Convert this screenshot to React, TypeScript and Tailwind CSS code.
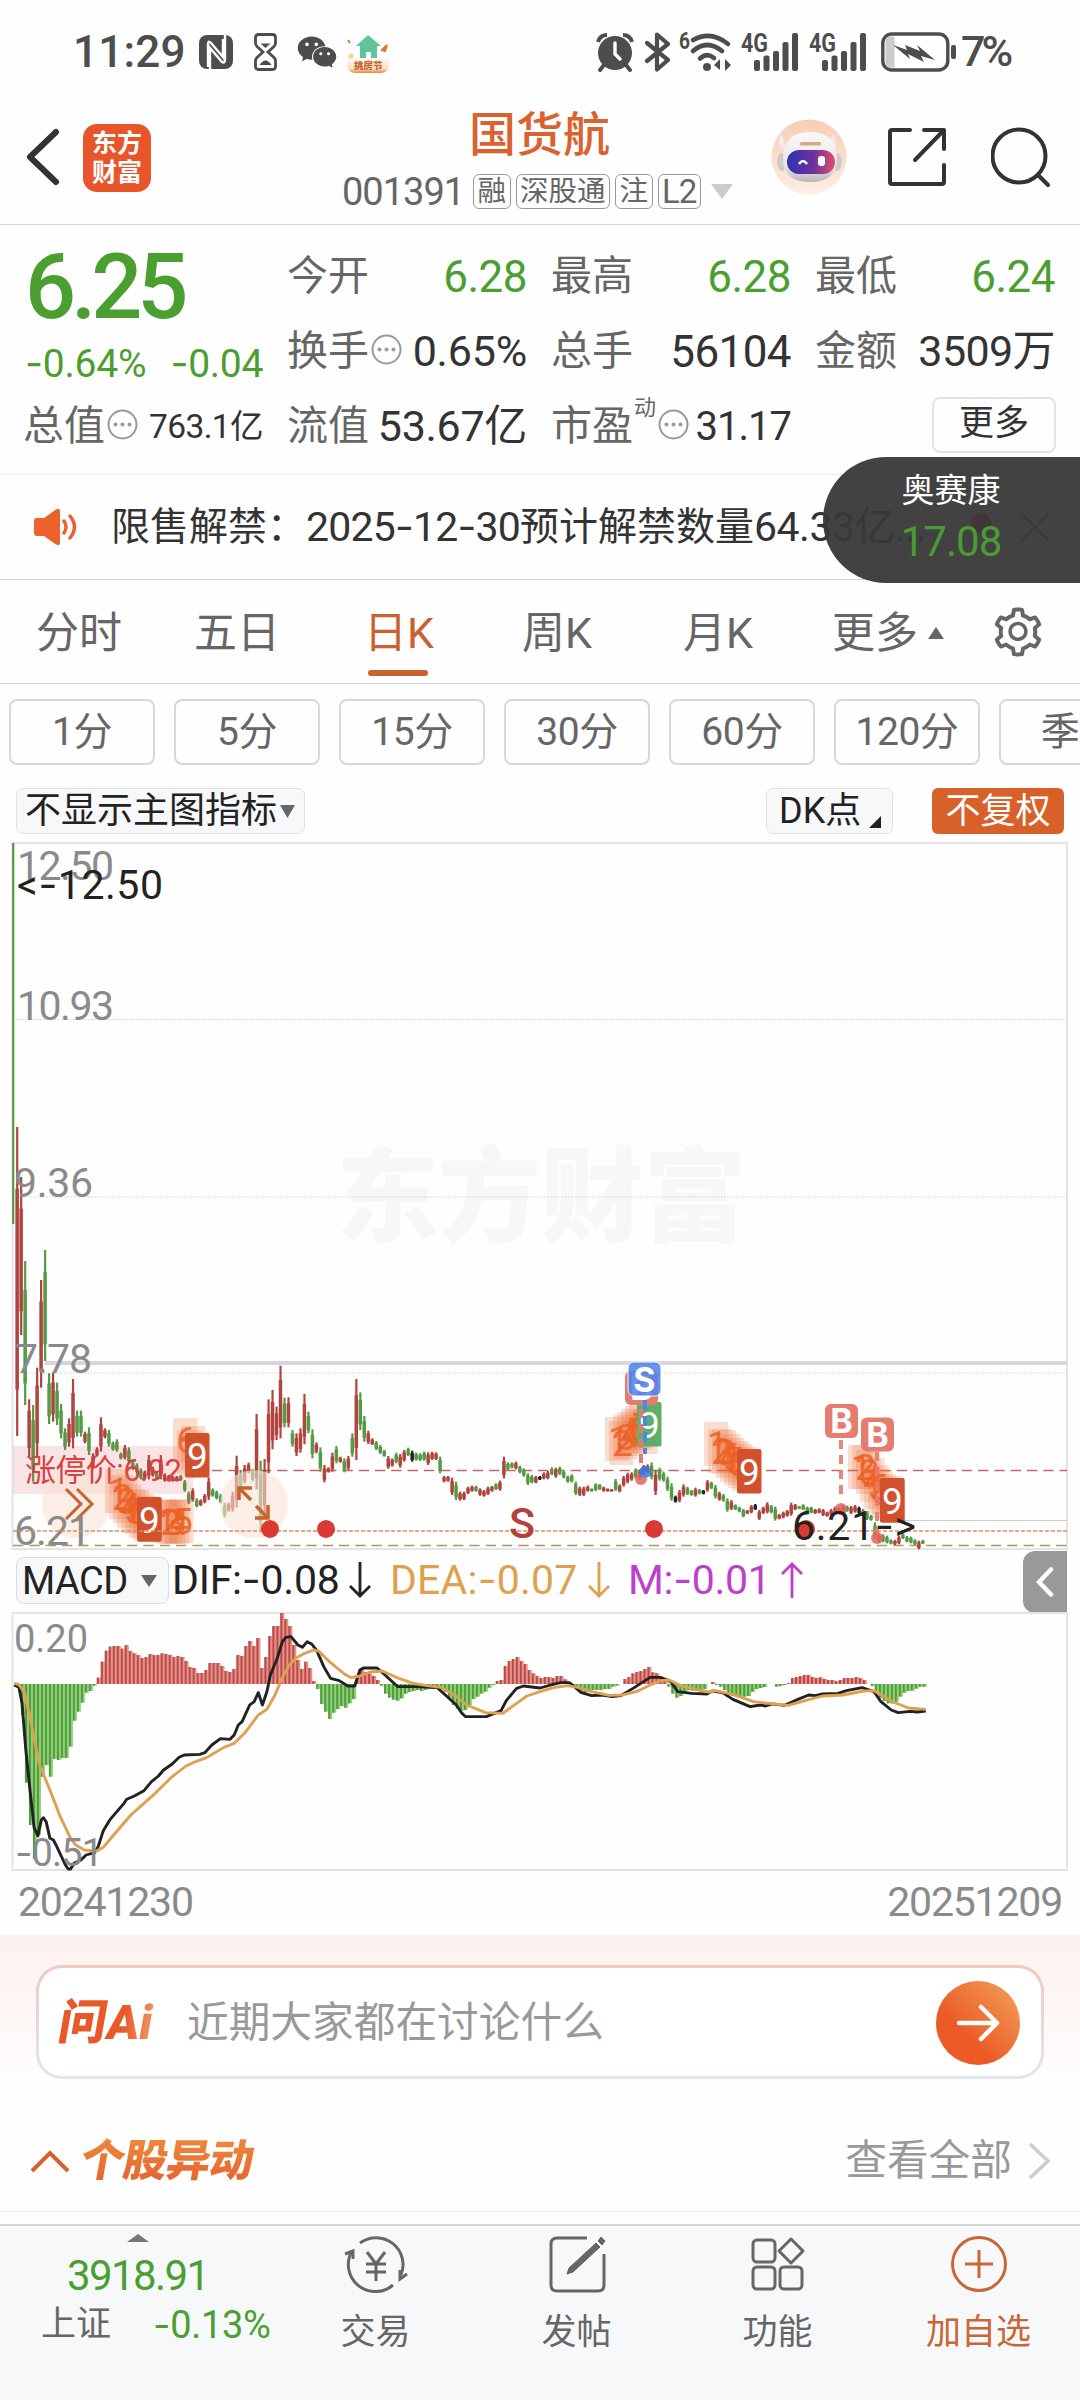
import React from "react";
import { AiFillWechat, AiOutlineSetting } from "react-icons/ai";

const RED = "#b0453f";
const GREEN = "#559a45";
const DARK = "#222222";
const STEP = 3.99;

// one entry per trading day: colour, top, bottom (in thirds of a px below y=1310)
const candles = `g -1401 -258,r -549 378,r -399 75,g -147 285,r 268 440,g 285 515,r 173 440,r -90 233,g -180 153,g 190 342,
r 188 335,g 218 345,g 282 385,g 355 420,r 325 410,r 207 415,g 302 380,g 302 380,r 365 400,g 352 435,
r 430 478,r 412 440,r 322 425,r 355 385,g 360 410,g 395 422,g 388 425,g 428 448,r 405 448,g 412 460,
g 455 480,g 460 490,g 475 508,r 482 508,r 435 508,r 470 500,g 485 508,r 435 508,r 490 515,r 495 515,
r 498 515,r 498 515,g 495 512,g 510 545,g 545 582,r 535 575,g 565 592,r 568 588,r 552 580,r 502 570,
g 535 560,g 542 568,g 552 580,g 578 622,r 578 605,r 545 605,r 437 592,g 480 545,r 465 520,r 458 490,
g 478 515,r 312 538,g 452 665,r 447 610,r 268 490,r 240 418,r 290 390,r 167 385,g 263 352,r 262 352,
g 360 410,r 370 438,r 355 428,r 252 403,g 305 370,g 358 445,r 397 430,g 412 485,r 465 517,r 472 488,
r 428 485,g 408 460,r 440 458,g 445 487,r 438 480,g 370 440,r 207 450,g 247 360,g 318 395,r 362 402,
r 385 405,g 393 420,g 405 432,g 420 440,r 438 476,r 445 470,g 428 460,r 432 473,r 420 455,g 413 438,
k 422 455,g 428 452,g 430 453,g 425 452,r 427 465,r 425 450,r 427 450,g 440 490,r 498 517,r 498 515,
r 503 555,g 515 570,r 545 572,r 545 570,r 530 552,r 527 545,g 527 545,r 535 557,r 540 560,r 530 555,
r 528 545,g 520 540,r 512 542,r 440 505,g 457 480,g 457 475,r 455 478,g 467 490,g 475 500,g 490 525,
g 495 520,r 498 520,k 498 510,r 487 508,r 483 508,g 472 495,r 473 503,g 470 495,g 482 505,g 497 518,
g 493 517,g 515 555,r 530 558,r 530 558,r 527 545,g 535 545,g 520 543,g 522 540,r 530 545,r 535 545,
r 537 545,g 507 543,r 523 547,r 498 530,r 488 520,r 487 512,g 475 505,r 480 510,r 465 495,r 463 490,
g 457 508,r 480 555,g 473 512,g 485 515,g 500 543,g 520 572,k 557 578,r 540 577,r 523 560,g 530 555,
g 540 557,r 533 560,g 537 553,k 540 553,r 510 545,g 515 537,g 525 565,r 545 572,g 552 575,g 565 605,
r 570 600,g 583 600,g 590 607,g 597 622,r 600 612,r 585 610,k 582 600,r 600 630,r 590 612,r 577 610,
g 585 610,g 590 632,r 612 628,r 605 625,r 600 620,r 578 617,r 582 600,g 588 597,g 583 600,g 590 608,
g 590 610,r 597 612,r 595 610,r 597 618,r 605 620,r 597 617,r 590 610,r 592 612,r 585 605,g 587 605,
r 588 612,r 585 608,k 590 612,g 597 620,g 603 630,g 615 632,g 637 685,r 670 698,g 673 697,g 677 700,
g 688 703,r 690 705,r 677 703,g 670 687,g 678 697,g 680 700,g 688 705,r 692 718,g 690 702`
    .split(",")
    .map((row) => {
        const [c, top, bottom] = row.trim().split(" ");
        return { color: c === "r" ? RED : c === "g" ? GREEN : DARK, top: 1310 + Number(top) / 3, bottom: 1310 + Number(bottom) / 3 };
    });

// MACD bar ends, the zero line is 282
const macdBars = [
    282, 292, 375, 578, 705, 806, 735, 560, 525, 560, 507, 510, 504, 504, 470, 392, 365, 338, 308, 303, 287, 263, 215, 182, 170, 168,
    168, 176, 165, 183, 190, 195, 204, 201, 192, 195, 195, 190, 192, 195, 201, 198, 201, 213, 231, 234, 249, 249, 240, 219, 219, 219,
    228, 243, 246, 237, 195, 198, 168, 153, 168, 144, 234, 201, 138, 108, 108, 69, 87, 108, 165, 210, 237, 215, 234, 273, 297, 342,
    365, 387, 368, 357, 348, 353, 340, 327, 255, 234, 246, 250, 258, 270, 287, 311, 323, 329, 332, 325, 311, 306, 303, 300, 303, 300,
    297, 297, 293, 297, 305, 325, 345, 355, 362, 360, 345, 327, 320, 311, 305, 293, 285, 273, 270, 228, 213, 207, 201, 213, 222, 240,
    250, 258, 264, 261, 261, 264, 258, 258, 268, 277, 288, 300, 305, 308, 302, 300, 300, 300, 297, 297, 290, 287, 282, 267, 261, 250,
    246, 243, 237, 231, 247, 250, 261, 267, 290, 311, 323, 318, 305, 300, 302, 303, 302, 297, 282, 276, 285, 290, 300, 310, 318, 320,
    320, 320, 318, 305, 297, 294, 291, 282, 282, 290, 288, 285, 279, 264, 261, 258, 255, 255, 261, 264, 262, 267, 270, 270, 273, 270,
    264, 264, 264, 261, 264, 270, 282, 288, 303, 325, 333, 340, 340, 335, 320, 308, 303, 302, 296, 290, 290,
];

const difLine =
    "41,285 55,292 64,340 75,480 87,600 99,712 110,738 120,690 126,683 134,695 145,745 155,750 165,770 175,792 190,825 198,837 205,837 215,820 235,810 250,795 275,788 285,770 300,722 320,688 345,658 360,640 368,628 390,618 418,602 440,575 460,558 475,540 500,522 520,502 535,495 580,493 595,488 615,465 640,446 668,448 680,435 692,405 703,395 725,345 738,335 750,308 762,345 775,305 785,255 805,205 820,155 830,142 845,140 865,165 878,172 892,155 905,162 920,182 940,230 960,265 985,272 1010,288 1030,288 1045,240 1055,234 1095,234 1115,252 1155,290 1210,290 1270,293 1290,312 1325,345 1340,368 1352,380 1412,380 1455,362 1470,332 1500,295 1520,288 1568,294 1603,284 1628,278 1653,278 1668,290 1686,307 1718,317 1748,315 1778,320 1803,317 1838,295 1888,262 1918,262 1948,275 1968,305 2008,310 2053,312 2068,303 2098,308 2128,328 2178,350 2208,345 2223,348 2243,342 2278,346 2308,332 2348,315 2368,317 2388,312 2433,310 2458,302 2503,293 2538,305 2558,335 2588,360 2608,368 2643,364 2663,366 2688,363";
const deaLine =
    "41,280 55,284 70,305 85,370 100,450 115,525 145,600 175,680 205,745 220,765 245,780 280,783 300,772 330,735 380,675 440,620 500,560 540,528 570,514 600,503 650,472 680,460 710,430 750,375 775,358 800,312 820,262 840,225 858,205 885,190 910,180 925,183 960,218 1000,252 1020,263 1045,258 1075,246 1110,243 1150,262 1200,280 1240,287 1280,292 1320,315 1355,345 1410,368 1460,370 1500,340 1530,318 1568,305 1608,293 1648,287 1678,292 1718,305 1768,316 1808,315 1848,305 1888,285 1918,272 1943,270 1978,287 2028,300 2058,306 2078,302 2128,313 2188,335 2248,342 2288,346 2338,332 2388,318 2448,315 2508,303 2538,302 2568,320 2598,338 2638,354 2688,358";

const stacks = [
    { digits: [6, 7, 8], x: 173, ys: [1418, 1430, 1426], nine: [185, 1433], fill: "#d2502c" },
    { digits: [1, 2, 3, 4, 5, 6, 7, 8], x: 105, ys: [1469, 1475, 1479, 1484, 1489, 1490, 1494, 1496], nine: [137, 1497], fill: "#d2502c" },
    { digits: [1, 2, 3, 4, 5, 6, 7, 8], x: 605, ys: [1417, 1421, 1415, 1412, 1409, 1406, 1404, 1410], nine: [637, 1402], fill: "#5fad6b" },
    { digits: [1, 2, 3, 4, 5, 6, 7, 8], x: 704, ys: [1422, 1429, 1430, 1434, 1438, 1441, 1444, 1447], nine: [737, 1449], fill: "#d2502c" },
    { digits: [1, 2, 3, 4, 5, 6, 7, 8], x: 848, ys: [1445, 1445, 1450, 1458, 1465, 1470, 1474, 1476], nine: [880, 1478], fill: "#d2502c" },
];

const tabs = ["分时", "五日", "日K", "周K", "月K"];
const periods = ["1分", "5分", "15分", "30分", "60分", "120分", "季K"];

// Roboto's hyphen is very short, Inter's has the wide one
const Num = ({ children, className = "" }: { children: string; className?: string }) => (
    <span className={`whitespace-nowrap ${className}`}>
        {children.split(/(-)/).map((part, i) =>
            part === "-" ? <span key={i} className="font-['Inter']">-</span> : part
        )}
    </span>
);

const InfoDots = () => (
    <svg className="w-[31px] h-[31px] shrink-0" viewBox="0 0 31 31">
        <circle cx="15.5" cy="15.5" r="14" fill="none" stroke="#999" strokeWidth="2" />
        <circle cx="8.5" cy="15.5" r="2" fill="#999" />
        <circle cx="15.5" cy="15.5" r="2" fill="#999" />
        <circle cx="22.5" cy="15.5" r="2" fill="#999" />
    </svg>
);

const Signal = () => (
    <svg className="w-[58px] h-[42px] overflow-visible" viewBox="0 0 58 42">
        <text x="0" y="21" fontSize="26" fontWeight="700" textLength="27" lengthAdjust="spacingAndGlyphs" fill="#4d4d4d">4G</text>
        <rect x="13" y="29" width="6" height="11" rx="2" fill="#4d4d4d" />
        <rect x="22.5" y="24.5" width="6" height="15.5" rx="2" fill="#4d4d4d" />
        <rect x="32" y="20" width="6" height="20" rx="2" fill="#4d4d4d" />
        <rect x="41.5" y="11" width="6" height="29" rx="2" fill="#4d4d4d" />
        <rect x="51" y="2" width="6" height="38" rx="2" fill="#4d4d4d" />
    </svg>
);

const StatusBar = () => (
    <div className="flex h-[100px] items-center pt-[3px] text-[#4d4d4d]">
        <span className="ml-[73px] w-[126px] text-[44px] font-medium leading-none tracking-[0.2px]">11:29</span>
        <svg className="w-[34px] h-[36px]" viewBox="0 0 34 36">
            <rect x="0" y="1" width="34" height="34" rx="8" fill="#4d4d4d" />
            <path d="M9 33V10.5Q9 6 12 9L24 23V5" fill="none" stroke="#fff" strokeWidth="2.4" />
            <path d="M11 36V14L23 28Q26 30 26 25V0" fill="none" stroke="#fff" strokeWidth="2.4" />
        </svg>
        <svg className="ml-[21px] w-[23px] h-[38px]" viewBox="0 0 23 38" fill="none" stroke="#4d4d4d" strokeWidth="2.8">
            <path d="M4.5 1.5h14q3 0 3 3V10q0 2-1.500 3.500L14 19l6 5.500q1.500 1.500 1.500 3.500v5.500q0 3-3 3h-14q-3 0-3-3V28q0-2 1.500-3.500L9 19l-6-5.500Q1.500 12 1.500 10V4.500q0-3 3-3z" />
            <path d="M6.500 10.500h10L11.500 15zM5.500 32q6-9 12 0z" fill="#4d4d4d" stroke="none" />
        </svg>
        <AiFillWechat className="ml-[18px] w-[44px] h-[44px]" />
        <svg className="ml-[8px] w-[42px] h-[42px]" viewBox="0 0 42 42">
            <defs>
                <linearGradient id="fest" x1="0" y1="0" x2="0" y2="1">
                    <stop offset="0" stopColor="#fff" />
                    <stop offset=".75" stopColor="#f8dfc0" />
                    <stop offset="1" stopColor="#e08a3c" />
                </linearGradient>
            </defs>
            <path d="M0 25q21 8 42 0v8q0 9-9 9H9q-9 0-9-9z" fill="url(#fest)" />
            <path d="M21 4L9 15h4v12h6v-6h5v6h6V15h4z" fill="#5fc49a" />
            <path d="M35 19l5-5-2 6zM1 9l2 3" fill="#d9772f" stroke="#d9772f" strokeWidth="2" />
            <circle cx="4" cy="25" r="2.500" fill="#f6d58a" />
            <text x="7" y="38" fontSize="9.500" fontWeight="900" fill="#c8622a" fontFamily="Noto Sans CJK SC">挑房节</text>
        </svg>

        <svg className="ml-auto w-[38px] h-[40px]" viewBox="0 0 38 40">
            <circle cx="19" cy="21" r="17" fill="#4d4d4d" />
            <path d="M2 10Q4 3 11 3M36 10Q34 3 27 3" fill="none" stroke="#4d4d4d" strokeWidth="4" />
            <path d="M8 33l-4 5M30 33l4 5" stroke="#4d4d4d" strokeWidth="4" strokeLinecap="round" />
            <path d="M19 11v11l5 5" fill="none" stroke="#fff" strokeWidth="3.400" strokeLinecap="round" />
        </svg>
        <svg className="ml-[11px] w-[26px] h-[40px]" viewBox="0 0 26 40" fill="none" stroke="#4d4d4d" strokeWidth="4.200" strokeLinejoin="round" strokeLinecap="round">
            <path d="M2 11l21 17-11 9.500V2.500L23 12 2 29" />
        </svg>
        <svg className="ml-[8px] w-[53px] h-[42px] overflow-visible" viewBox="0 0 53 42">
            <text x="0" y="18" fontSize="23" fontWeight="700" textLength="11" lengthAdjust="spacingAndGlyphs" fill="#4d4d4d">6</text>
            <g fill="none" stroke="#4d4d4d" strokeWidth="4.600" strokeLinecap="round">
                <path d="M14 9Q32-1 49 13" />
                <path d="M14 20Q28 8 43 20" />
                <path d="M21 27.500Q28 21 35 27" />
            </g>
            <circle cx="28" cy="36" r="4" fill="#4d4d4d" />
            <path d="M35 34l6-6v11zM46 28v12l6-6z" fill="#4d4d4d" />
        </svg>
        <div className="ml-[9px] flex gap-[10px]">
            <Signal />
            <Signal />
        </div>
        <svg className="ml-[14px] w-[76px] h-[40px]" viewBox="0 0 76 40">
            <rect x="1.800" y="2" width="65" height="36" rx="9" fill="none" stroke="#4d4d4d" strokeWidth="3.400" />
            <path d="M13.500 4.500v31H10q-5.500 0-5.500-5.500V10Q4.500 4.500 10 4.500z" fill="#ccc" />
            <path d="M12 13l14 5-2-5 15 6-3-6 18 15-14-4 3 6-16-8 2 5z" fill="#4d4d4d" />
            <rect x="70" y="13" width="5" height="14" rx="2" fill="#4d4d4d" />
        </svg>
        <span className="ml-[4px] mr-[68px] w-[51px] text-[43px] font-medium leading-none tracking-[-4px]">7%</span>
    </div>
);

const Header = () => (
    <div className="flex h-[125px] items-center border-b border-[#d6d6d6] text-[#333]">
        <svg className="ml-[25px] -mt-[10px] w-[36px] h-[60px] shrink-0" viewBox="0 0 36 60">
            <path d="M31 5L5 30l26 25" fill="none" stroke="#333" strokeWidth="6" strokeLinecap="round" strokeLinejoin="round" />
        </svg>
        <div className="ml-[22px] -mt-[8px] flex h-[68px] w-[68px] shrink-0 flex-col items-center justify-center rounded-[14px] bg-[#e8552b] text-[25px] font-bold leading-[29px] text-white">
            <span>东方</span>
            <span>财富</span>
        </div>
        <div className="ml-[186px] -mt-[6px] flex w-[400px] flex-col">
            <h1 className="ml-[132px] text-[47px] font-medium leading-[60px] text-[#d9622f]">国货航</h1>
            <div className="mt-[5px] ml-[5px] flex items-center text-[#666]">
                <span className="w-[131px] text-[38px] leading-[44px] tracking-[-1px]">001391</span>
                <div className="flex gap-[5px] text-[28.500px] leading-[33px]">
                    {["融", "深股通", "注", "L2"].map((tag) => (
                        <span key={tag} className="rounded-[6px] border-[1.500px] border-[#999] px-[3.500px] whitespace-nowrap last:text-[33px] last:tracking-[-1px]">{tag}</span>
                    ))}
                </div>
                <svg className="ml-[10px] w-[22px] h-[15px]" viewBox="0 0 22 15"><path d="M0 0h22L11 15z" fill="#ccc" /></svg>
            </div>
        </div>
        <svg className="ml-[34px] -mt-[10px] w-[76px] h-[76px] shrink-0" viewBox="0 0 76 76">
            <defs>
                <linearGradient id="robotBg" x1="0" y1="0" x2="0" y2="1">
                    <stop offset="0" stopColor="#f8cdb4" />
                    <stop offset="1" stopColor="#fdeee6" />
                </linearGradient>
                <linearGradient id="robotHead" x1="0" y1="0" x2="0" y2="1">
                    <stop offset="0" stopColor="#fbf9f8" />
                    <stop offset=".7" stopColor="#e9e4e4" />
                    <stop offset="1" stopColor="#bdb4b6" />
                </linearGradient>
                <linearGradient id="visor">
                    <stop offset="0" stopColor="#3232b0" />
                    <stop offset=".55" stopColor="#6a32a0" />
                    <stop offset="1" stopColor="#e0506a" />
                </linearGradient>
            </defs>
            <circle cx="38" cy="38" r="37.500" fill="url(#robotBg)" />
            <path d="M11 14q-8 13 4 17M61 14q9 13-2 17" fill="#f3ece8" />
            <ellipse cx="11" cy="43" rx="5" ry="9" fill="#d0c9ca" />
            <ellipse cx="66" cy="43" rx="5" ry="9" fill="#d0c9ca" />
            <path d="M12 40Q12 13 39 13t27 27q0 23-27 23T12 40z" fill="url(#robotHead)" />
            <rect x="29" y="23" width="21" height="3.500" rx="1.500" fill="#d6a98a" />
            <rect x="16" y="31" width="48" height="24" rx="12" fill="url(#visor)" />
            <path d="M28 45q4-6 8 0" fill="none" stroke="#fff" strokeWidth="2.500" />
            <rect x="47" y="37" width="7" height="10" rx="3" fill="#fff" />
        </svg>
        <svg className="ml-[40px] -mt-[10px] w-[60px] h-[60px] shrink-0" viewBox="0 0 60 60" fill="none" stroke="#333" strokeWidth="4" strokeLinecap="round" strokeLinejoin="round">
            <path d="M23 3H5Q3 3 3 5v50q0 2 2 2h50q2 0 2-2V38M37 3h20v19M57 3L28 33" />
        </svg>
        <svg className="ml-[44px] -mt-[10px] w-[62px] h-[62px] shrink-0" viewBox="0 0 62 62" fill="none" stroke="#333" strokeWidth="4" strokeLinecap="round">
            <circle cx="28" cy="30" r="26.500" />
            <path d="M47 49l10 10" />
        </svg>
    </div>
);

const Cell = ({ label, value, info, sup, valueClass = "text-[#333]" }: { label: string; value: string; info?: boolean; sup?: string; valueClass?: string }) => (
    <div className="flex h-[75px] items-center">
        <span className="-ml-[2px] text-[41px] leading-none text-[#666]">{label}</span>
        {sup && <span className="mb-[38px] ml-[1px] text-[22px] leading-none text-[#666]">{sup}</span>}
        {info && <div className="-mt-[5px] ml-[2px]"><InfoDots /></div>}
        <Num className={`ml-auto leading-none ${valueClass}`}>{value}</Num>
    </div>
);

const Quote = () => (
    <div className="grid h-[250px] grid-cols-[238px_238px_238px_238px] gap-x-[26px] border-b border-[#eee] pt-[14px] pl-[25px] content-start">
        <div className="w-[238px] text-[#4b9e30]">
            <div className="flex h-[98px] items-center text-[90px] font-medium leading-none tracking-[-5px]">6.25</div>
            <div className="flex h-[52px] items-center justify-between text-[39px] leading-none">
                <Num className="tracking-[-0.200px]">-0.64%</Num>
                <Num className="tracking-[-0.300px]">-0.04</Num>
            </div>
            <Cell label="总值" value="763.1亿" info valueClass="text-[#333] text-[33.500px] tracking-[-0.600px]" />
        </div>
        <div>
            <Cell label="今开" value="6.28" valueClass="text-[#4b9e30] text-[44px] tracking-[-0.500px]" />
            <Cell label="换手" value="0.65%" info valueClass="text-[#333] text-[43px] tracking-[-0.200px]" />
            <Cell label="流值" value="53.67亿" valueClass="text-[#333] text-[43px] tracking-[-0.300px]" />
        </div>
        <div>
            <Cell label="最高" value="6.28" valueClass="text-[#4b9e30] text-[44px] tracking-[-0.500px]" />
            <Cell label="总手" value="56104" valueClass="text-[#333] text-[44px] tracking-[-0.600px]" />
            <Cell label="市盈" value="31.17" sup="动" info valueClass="text-[#333] text-[40px] tracking-[-1px]" />
        </div>
        <div>
            <Cell label="最低" value="6.24" valueClass="text-[#4b9e30] text-[44px] tracking-[-0.500px]" />
            <Cell label="金额" value="3509万" valueClass="text-[#333] text-[43px] tracking-[-0.600px]" />
            <div className="flex h-[72px] items-center justify-end">
                <button className="-mr-[1px] h-[56px] w-[124px] rounded-[8px] border-2 border-[#e4e4e4] pb-[3px] text-[35px] leading-none text-[#333]">更多</button>
            </div>
        </div>
    </div>
);

const Notice = () => (
    <div className="relative flex h-[105px] items-center border-b border-[#d6d6d6]">
        <svg className="ml-[33px] w-[46px] h-[38px]" viewBox="0 0 46 38">
            <path d="M1 13q0-3 3-3h7L23 1.500q4-2 4 2v31q0 4-4 2L11 28H4q-3 0-3-3z" fill="#eb622c" />
            <path d="M31 13q4 6 0 12M37 8q9 11 0 22" fill="none" stroke="#eb622c" strokeWidth="3.500" strokeLinecap="round" />
        </svg>
        <div className="ml-[32px] flex items-center text-[39px] leading-none text-[#333]">
            <span className="w-[195px] whitespace-nowrap">限售解禁：</span>
            <Num className="w-[214px] text-[41px] tracking-[-0.800px]">2025-12-30</Num>
            <span>预计解禁数量</span>
            <Num className="text-[41px] tracking-[-0.500px]">64.33亿...</Num>
        </div>
        <span className="absolute left-[971px] top-[38px] h-[20px] w-[20px] rounded-full bg-red-500" />
        <svg className="absolute left-[1020px] top-[37px] w-[30px] h-[30px]" viewBox="0 0 30 30"><path d="M1 1l28 28M29 1L1 29" stroke="#666" strokeWidth="2" /></svg>
        {/* floating quote */}
        <div className="absolute right-0 -top-[18px] z-10 flex h-[126px] w-[257px] flex-col items-center rounded-l-full bg-[#383838]/95 pt-[15px] pr-[1px] text-white">
            <span className="text-[33px] leading-[38px]">奥赛康</span>
            <span className="mt-[7px] text-[42px] leading-[50px] tracking-[-1px] text-[#4b9b34]">17.08</span>
        </div>
    </div>
);

const Tabs = () => (
    <div className="flex h-[104px] items-center border-b border-[#d6d6d6] pt-[3px] text-[43px] leading-none text-[#666]">
        <div className="grid grid-cols-[158px_158px_166px_150px_172px]">
            {tabs.map((tab) => (
                <div key={tab} className={`relative text-center ${tab === "日K" ? "text-[#cc6130]" : ""}`}>
                    {tab}
                    {tab === "日K" && <span className="absolute -bottom-[21px] left-[52px] h-[6px] w-[60px] rounded-full bg-[#cc6130]" />}
                </div>
            ))}
        </div>
        <span className="ml-[28px]">更多</span>
        <svg className="ml-[10px] w-[16px] h-[12px]" viewBox="0 0 16 12"><path d="M8 0l8 12H0z" fill="#666" /></svg>
        <AiOutlineSetting className="-mt-[3px] ml-[46px] w-[56px] h-[56px]" />
    </div>
);

const Stack = ({ digits, x, ys, nine, fill }: { digits: number[]; x: number; ys: number[]; nine: number[]; fill: string }) => (
    <g fontSize="37">
        {digits.map((d, i) => (
            <g key={d}>
                <rect x={x + i * 4} y={ys[i]} width="24.500" height="44" rx="1.500" fill="#ec6a2c" opacity=".22" />
                <text x={x + i * 4 + 3} y={ys[i] + 35} fill="#ec5e24" opacity=".85">{d}</text>
            </g>
        ))}
        <rect x={nine[0]} y={nine[1]} width="24.500" height="44.500" rx="2" fill={fill} />
        <text x={nine[0] + 2} y={nine[1] + 35.500} fill="#fff">9</text>
    </g>
);

const PriceChart = () => (
    <svg className="mt-[4px] block w-[1080px] h-[714px]" viewBox="0 838 1080 714">
        <text x="336" y="1234" fontSize="103" fontWeight="900" fill="#f7f7f7" textLength="410">东方财富</text>
        <path d="M12.500 843H1067V1549H12.500z" fill="none" stroke="#e4e4e4" strokeWidth="2" />
        <path d="M13 1019.500H1067M13 1197H1067M13 1373H1067" stroke="#d0d0d0" strokeWidth="1" strokeDasharray="1.500 1.500" />
        <path d="M45 1363H1067" stroke="#d6d6dc" strokeWidth="4" />
        <path d="M900 1520.500H1067" stroke="#ccc" strokeWidth="1" />
        <path d="M212 1470.500H1067" stroke="#c9655f" strokeWidth="1.500" strokeDasharray="10.300 6" />
        <path d="M13 1545.500H1067" stroke="#a79d5c" strokeWidth="1.300" strokeDasharray="10.300 6" />

        {candles.map((c, i) => {
            const h = c.bottom - c.top;
            const x = 13.2 + i * STEP;
            return (
                <g key={i} fill={c.color}>
                    <rect x={x - 1.1} y={c.top} width="2.200" height={h} />
                    {i > 0 && <rect x={x - 1.8} y={c.top + h * 0.2} width="3.500" height={h * 0.65} />}
                </g>
            );
        })}

        <rect x="13" y="1446" width="180" height="48" fill="#dc4650" opacity=".14" />
        <g fill="none" stroke="#cc6130" strokeWidth="3">
            <circle cx="76" cy="1504" r="34" fill="#f6e2d6" opacity=".6" stroke="none" />
            <circle cx="254" cy="1504" r="34" fill="#f6e2d6" opacity=".6" stroke="none" />
            <path d="M66 1489l15 15-15 15M77 1489l15 15-15 15" />
            <path d="M251 1500l-12-12M252 1488h-13v12M256 1506l12 12M255 1518h13v-13" strokeWidth="3.500" />
        </g>

        <g fontSize="41" fill="#8a8a8a">
            <text x="17" y="880" textLength="97">12.50</text>
            <text x="17" y="1020" textLength="97">10.93</text>
            <text x="14" y="1197" textLength="79">9.36</text>
            <text x="15" y="1373" textLength="77">7.78</text>
            <text x="14" y="1545" textLength="77">6.21</text>
        </g>
        <text x="17" y="898.500" fontSize="41" fill={DARK} textLength="146">&lt;<tspan fontFamily="Inter">-</tspan>12.50</text>
        <text x="25" y="1480.500" fontSize="31" fill="#d9403f" textLength="157">涨停价:6.92</text>

        <Stack digits={[1, 2, 3, 4, 5]} x={153} ys={[1499, 1500, 1500, 1500, 1499]} nine={[137, 1497]} fill="#d2502c" />
        {stacks.map((s) => <Stack key={s.x} {...s} />)}

        <path d="M13 1531H1067" stroke="#dd8d62" strokeWidth="1.600" strokeDasharray="4 2" />
        {[270, 326, 654, 806].map((cx) => <circle key={cx} cx={cx} cy="1529" r="9" fill="#da3a33" />)}
        <text x="509" y="1538" fontSize="43" fontWeight="500" fill="#b8403c">S</text>

        <g fontWeight="700" fontSize="34" fill="#fff" textAnchor="middle" fontFamily="Inter">
            <rect x="625" y="1371" width="33" height="34" rx="6" fill="#e67c70" />
            <text x="641.500" y="1400">B</text>
            <path d="M641 1409v54" stroke="#e67c70" strokeWidth="4" strokeDasharray="9 6" />
            <path d="M645 1400v54" stroke="#4f86ec" strokeWidth="4" strokeDasharray="10 6" />
            <rect x="628" y="1362" width="33" height="34" rx="6" fill="#4f86ec" opacity=".88" stroke="#fff" />
            <text x="644.500" y="1391.500">S</text>
            <path d="M841 1440v58M877 1452v86" stroke="#e67c70" strokeWidth="4" strokeDasharray="9 6" opacity=".9" />
            <rect x="825" y="1404" width="33" height="34" rx="6" fill="#e67c70" />
            <text x="841.500" y="1433">B</text>
            <rect x="861" y="1417.500" width="33" height="34" rx="6" fill="#e67c70" />
            <text x="877.500" y="1446.500">B</text>
        </g>
        <rect x="880" y="1478" width="24.500" height="44.500" rx="2" fill="#d2502c" />
        <text x="882" y="1513.500" fontSize="37" fill="#fff">9</text>
        <g opacity=".85">
            <circle cx="641" cy="1479" r="6" fill="#e4655a" />
            <circle cx="645" cy="1472" r="6" fill="#3d74e0" />
            <circle cx="841" cy="1509" r="6" fill="#e4655a" />
            <circle cx="877" cy="1538" r="6" fill="#e4655a" />
        </g>
        <text x="792" y="1540" fontSize="41" fill={DARK} textLength="124">6.21<tspan fontFamily="Inter">-</tspan>&gt;</text>
    </svg>
);

const Arrow = ({ up }: { up?: boolean }) => (
    <svg className={`w-[24px] h-[38px] ${up ? "rotate-180" : ""}`} viewBox="0 0 24 38" fill="none" stroke="currentColor" strokeWidth="2.800">
        <path d="M12 1v34M2 25l10 10 10-10" />
    </svg>
);

const MacdHeader = () => (
    <div className="flex h-[60px] items-center pl-[16px] text-[41px] leading-none">
        <div className="-mt-1 flex h-[47px] w-[153px] items-center rounded-[8px] border-[1.500px] border-[#dcdde0] bg-[#f7f8fa] pt-[2px] pl-[5px] text-[38px] text-[#222]">
            <span className="tracking-[-0.500px]">MACD</span>
            <svg className="ml-[13px] w-[16px] h-[12px]" viewBox="0 0 16 12"><path d="M0 0h16L8 12z" fill="#666" /></svg>
        </div>
        <div className="-mt-[5px] flex h-[40px] items-center">
            <div className="flex w-[219px] items-center pl-[3px] text-[#222]">
                <Num className="w-[176px] tracking-[-0.200px]">DIF:-0.08</Num>
                <Arrow />
            </div>
            <div className="flex w-[240px] items-center pl-[2px] text-[#e0a04c]">
                <Num className="w-[197px] tracking-[0.200px]">DEA:-0.07</Num>
                <Arrow />
            </div>
            <div className="flex items-center text-[#bb41cc]">
                <Num className="w-[152px] tracking-[-0.300px]">M:-0.01</Num>
                <Arrow up />
            </div>
        </div>
        <button className="ml-auto mr-[13px] flex h-[62px] w-[44px] items-center justify-center rounded-l-[12px] bg-[#999]">
            <svg className="w-[18px] h-[30px]" viewBox="0 0 18 30"><path d="M15 2.500L3 15l12 12.500" fill="none" stroke="#fff" strokeWidth="4.500" strokeLinecap="round" /></svg>
        </button>
    </div>
);

const MacdChart = () => (
    <svg className="block w-[1080px] h-[262px]" viewBox="0 1612 1080 262">
        <path d="M12.500 1613H1067V1870H12.500z" fill="none" stroke="#e4e4e4" strokeWidth="2" />
        {macdBars.map((v, i) => {
            const y = Math.min(1684, 1590 + v / 3);
            const h = Math.abs(v - 282) / 3;
            const x = 13 + i * STEP;
            return (
                <g key={i}>
                    <rect x={x} y={y} width="4" height={h} fill={v < 282 ? "#ef8e88" : "#8bd178"} />
                    <rect x={x} y={y} width="2" height={h} fill={v < 282 ? "#b24c46" : "#529c3c"} />
                </g>
            );
        })}
        <g transform="translate(0 1590) scale(0.34439 0.33333)" fill="none" strokeLinejoin="round">
            <polyline points={difLine} stroke={DARK} strokeWidth="8.500" />
            <polyline points={deaLine} stroke="#dfa04f" strokeWidth="8.500" />
        </g>
        <text x="14" y="1651.500" fontSize="38" fill="#8a8a8a" textLength="74">0.20</text>
        <text x="15" y="1865.500" fontSize="38" fill="#8a8a8a" textLength="88"><tspan fontFamily="Inter">-</tspan>0.51</text>
    </svg>
);

const AskAi = () => (
    <div className="h-[172px] bg-linear-to-b from-[#fdf1ee] to-white px-[36px] pt-[30px]">
        <div className="h-[114px] rounded-[26px] bg-linear-to-b from-[#efc9c0] to-[#e0e7f2] p-[3px]">
            <div className="flex h-full items-center rounded-[23px] bg-white pt-[1px]">
                <span className="ml-[20px] w-[128px] -skew-x-10 bg-linear-to-r from-[#e8592a] from-50% to-[#f0a06a] to-80% bg-clip-text text-[48px] font-black leading-[60px] text-transparent">问Ai</span>
                <span className="text-[41.700px] leading-none text-[#999]">近期大家都在讨论什么</span>
                <div className="ml-auto mr-[21px] flex h-[84px] w-[84px] items-center justify-center rounded-full bg-linear-to-tr from-[#ec5a26] from-35% to-[#f0a15c]">
                    <svg className="w-[44px] h-[38px]" viewBox="0 0 44 38" fill="none" stroke="#fff" strokeWidth="4.500" strokeLinecap="round" strokeLinejoin="round">
                        <path d="M3 19h37M25 3l16 16-16 16" />
                    </svg>
                </div>
            </div>
        </div>
    </div>
);

const Moves = () => (
    <div className="flex h-[105px] items-center border-b border-[#eee] pt-[3px] text-[41.700px] leading-none">
        <svg className="ml-[30px] w-[40px] h-[24px]" viewBox="0 0 40 24"><path d="M2 22L20 4l18 18" fill="none" stroke="#d5622d" strokeWidth="4" /></svg>
        <h2 className="ml-[11px] -skew-x-10 bg-linear-to-b from-[#eb8f3e] to-[#e65a2c] bg-clip-text text-[44px] font-black leading-[60px] tracking-[-1px] text-transparent">个股异动</h2>
        <span className="ml-auto text-[#999]">查看全部</span>
        <svg className="ml-[15px] mr-[29px] w-[24px] h-[38px]" viewBox="0 0 24 38"><path d="M3 2l18 17L3 36" fill="none" stroke="#ccc" strokeWidth="3.500" /></svg>
    </div>
);

const navItems = [
    {
        name: "交易",
        icon: (
            <svg className="w-[66px] h-[58px]" viewBox="0 0 66 58" fill="none" stroke="#666" strokeWidth="3">
                <path d="M17 8A27 27 0 0 1 58 40M50 50A27 27 0 0 1 9 16" />
                <path d="M2 19l8-3v8M64 39l-7 5v-9" />
                <path d="M24 17l9 12 9-12M33 29v17M23 29h20M23 37h20" />
            </svg>
        ),
    },
    {
        name: "发帖",
        icon: (
            <svg className="w-[58px] h-[58px]" viewBox="0 0 58 58" fill="none" stroke="#666" strokeWidth="3">
                <path d="M39 3H9Q3 3 3 9v41q0 6 6 6h41q6 0 6-6V19" />
                <path d="M48 8l4 4-27 25-6 2 2-6zM50 6l3-4 4 4-3 4z" fill="#666" strokeWidth="1" />
            </svg>
        ),
    },
    {
        name: "功能",
        icon: (
            <svg className="w-[56px] h-[56px]" viewBox="0 0 56 56" fill="none" stroke="#666" strokeWidth="3">
                <rect x="3" y="4" width="22" height="22" rx="4" />
                <rect x="3" y="31" width="22" height="22" rx="4" />
                <rect x="30" y="31" width="22" height="22" rx="4" />
                <path d="M41 3l12 12-12 12-12-12z" strokeLinejoin="round" />
            </svg>
        ),
    },
    {
        name: "加自选",
        icon: (
            <svg className="w-[58px] h-[58px]" viewBox="0 0 58 58" fill="none" stroke="#c96636" strokeWidth="3">
                <circle cx="29" cy="29" r="26.500" />
                <path d="M29 15v28M15 29h28" />
            </svg>
        ),
    },
];

const BottomBar = () => (
    <div className="mt-[12px] flex h-[176px] border-t-2 border-[#d0d5d8] bg-[#f7f8fa] text-[#666]">
        <div className="flex w-[275px] flex-col">
            <svg className="ml-[127px] mt-[8px] w-[22px] h-[8px]" viewBox="0 0 22 8"><path d="M11 0l11 8H0z" fill="#777" /></svg>
            <Num className="mt-[12px] ml-[67px] text-[42px] leading-[44px] tracking-[-1.600px] text-[#4b9e30]">3918.91</Num>
            <div className="mt-[3px] ml-[41px] flex items-center leading-[46px]">
                <span className="w-[112px] text-[35px]">上证</span>
                <Num className="text-[38px] tracking-[-0.300px] text-[#4b9e30]">-0.13%</Num>
            </div>
        </div>
        {navItems.map((item) => (
            <div key={item.name} className={`flex w-[201px] flex-col items-center pt-[9px] text-[35px] ${item.name === "加自选" ? "text-[#c96636]" : ""}`}>
                <div className="flex h-[58px] items-center">{item.icon}</div>
                <span className="mt-[15px] leading-[50px]">{item.name}</span>
            </div>
        ))}
    </div>
);

export default function App() {
    return (
        <div className="flex h-[2400px] w-[1080px] flex-col overflow-hidden bg-[#fefefe] font-['Roboto','Noto_Sans_CJK_SC',sans-serif]">
            <StatusBar />
            <Header />
            <Quote />
            <Notice />
            <Tabs />
            <div className="flex gap-[19px] overflow-hidden pt-[15px] pl-[9px]">
                {periods.map((p) => (
                    <div key={p} className="flex h-[66px] w-[146px] shrink-0 items-center justify-center rounded-[8px] border-2 border-[#d8d8d8] text-[39px] leading-none tracking-[-0.500px] text-[#666]">{p}</div>
                ))}
            </div>
            <div className="mt-[23px] flex h-[46px] shrink-0 items-center px-[16px] text-[36px] leading-none text-[#222]">
                <div className="flex h-[46px] w-[289px] items-center rounded-[7px] border-[1.500px] border-[#e0e1e4] bg-[#f7f8fa] pl-[8px]">
                    不显示主图指标
                    <svg className="ml-[3px] w-[15px] h-[13px]" viewBox="0 0 15 13"><path d="M0 0h15L7.500 13z" fill="#666" /></svg>
                </div>
                <div className="ml-auto flex h-[46px] w-[127px] items-center rounded-[7px] border-[1.500px] border-[#e0e1e4] bg-[#f7f8fa] pl-[12px]">
                    <span>DK点</span>
                    <svg className="mt-[22px] ml-[8px] w-[12px] h-[12px]" viewBox="0 0 12 12"><path d="M12 0v12H0z" fill="#222" /></svg>
                </div>
                <div className="ml-[39px] flex h-[46px] w-[132px] items-center justify-center rounded-[6px] bg-[#d86029] text-[35px] text-white">不复权</div>
            </div>
            <PriceChart />
            <MacdHeader />
            <MacdChart />
            <div className="flex h-[61px] items-center justify-between pr-[18px] pl-[18px] pb-[5px] text-[41px] leading-none tracking-[-1.200px] text-[#8a8a8a]">
                <span>20241230</span>
                <span>20251209</span>
            </div>
            <AskAi />
            <Moves />
            <BottomBar />
        </div>
    );
}
